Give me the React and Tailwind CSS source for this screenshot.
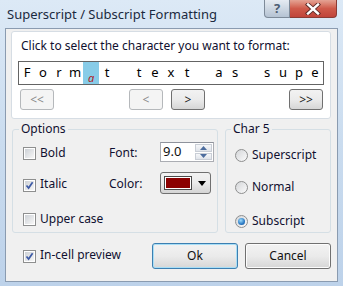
import React from 'react';

const chars = ['F', 'o', 'r', 'm', 'a', 't', ' ', 't', 'e', 'x', 't', ' ', 'a', 's', ' ', 's', 'u', 'p', 'e'];

function CheckBox({ checked }) {
  return (
    <span className="w-[13px] h-[13px] border border-[#8e8f8f] bg-white p-[1px] flex shrink-0">
      <span className="flex-1 bg-gradient-to-br from-[#cdd1d6] to-[#f7f7f7] flex items-center justify-center">
        {checked && (
          <svg width="9" height="9" viewBox="0 0 9 9">
            <path d="M1.5 4.5 L3.6 7 L7.6 1.3" fill="none" stroke="#3d5aa6" strokeWidth="1.7" />
          </svg>
        )}
      </span>
    </span>
  );
}

function Radio({ checked }) {
  return (
    <span className="w-[13px] h-[13px] rounded-full border border-[#8e8f8f] bg-gradient-to-br from-[#d4d6d9] to-[#fbfbfb] flex items-center justify-center shrink-0">
      {checked && <span className="w-[7px] h-[7px] rounded-full bg-[radial-gradient(circle_at_40%_35%,#9fdcfb,#2a79c4_60%,#174f8f)]" />}
    </span>
  );
}

function NavButton({ label, enabled }) {
  return enabled ? (
    <button className="w-[34px] h-[21px] rounded-[3px] border border-[#707070] bg-gradient-to-b from-[#f2f2f2] via-[#ebebeb] to-[#d6d6d6] text-[12px] leading-none text-[#1a1a1a]">
      {label}
    </button>
  ) : (
    <button className="w-[34px] h-[21px] rounded-[3px] border border-[#b5b8bb] bg-[#f4f4f4] text-[12px] leading-none text-[#8a8a8a]">
      {label}
    </button>
  );
}

export default function App() {
  return (
    <div className="w-[343px] h-[286px] overflow-hidden bg-gradient-to-b from-[#dce9f6] via-[#cadcef] to-[#bdd2ea] flex flex-col font-['Noto_Sans',sans-serif] text-[12px] text-[#101030]">
      {/* title bar */}
      <div className="h-[28px] flex items-start shrink-0">
        <div className="pl-[7px] pt-[5px] text-[13px] leading-[18px] text-[#1a2a40]">Superscript / Subscript Formatting</div>
        <div className="ml-auto mr-[6px] flex">
          <div className="w-[26px] h-[18px] rounded-bl-[4px] border border-t-0 border-[#7d8a99] bg-gradient-to-b from-[#e5ebf2] to-[#b5c3d3] flex items-center justify-center text-[13px] font-bold leading-none text-[#4b5c72]">
            ?
          </div>
          <div className="w-[47px] h-[18px] rounded-br-[4px] border border-t-0 border-l-0 border-[#8b3b34] bg-gradient-to-b from-[#e4a394] via-[#cf5a4a] to-[#c0443a] flex items-center justify-center">
            <svg width="16" height="12" viewBox="0 0 16 12">
              <path d="M3 1.5 L13 10.5 M13 1.5 L3 10.5" stroke="#5a2a26" strokeWidth="4.2" strokeLinecap="square" />
              <path d="M3 1.5 L13 10.5 M13 1.5 L3 10.5" stroke="#ffffff" strokeWidth="2.4" strokeLinecap="square" />
            </svg>
          </div>
        </div>
      </div>

      {/* client area */}
      <div className="ml-[5px] w-[333px] h-[254px] border border-[#8a9bb0] bg-[#f0f0f0] flex flex-col">
        {/* character panel */}
        <div className="mt-[2px] ml-[5px] w-[320px] h-[88px] rounded-[3px] border border-[#d6dde4] bg-white flex flex-col">
          <div className="mt-[6px] pl-[9px] leading-[16px]">Click to select the character you want to format:</div>
          <div className="mt-[7px] ml-[6px] w-[306px] h-[24px] border border-[#646464] flex">
            {chars.map((c, i) =>
              i === 4 ? (
                <span key={i} className="w-[16px] h-full bg-[#88cce8] flex justify-center italic text-[11px] leading-none text-[#b01818] pt-[10px]">
                  a
                </span>
              ) : (
                <span key={i} className="w-[16px] h-full flex items-center justify-center text-[13px] text-black">
                  {c}
                </span>
              )
            )}
          </div>
          <div className="mt-[4px] flex">
            <div className="ml-[8px]"><NavButton label="<<" /></div>
            <div className="ml-[75px]"><NavButton label="<" /></div>
            <div className="ml-[8px]"><NavButton label=">" enabled /></div>
            <div className="ml-[84px]"><NavButton label=">>" enabled /></div>
          </div>
        </div>

        {/* group boxes */}
        <div className="mt-[2px] flex">
          <fieldset className="ml-[6px] w-[206px] h-[112px] rounded-[3px] border border-[#d5dfe5]">
            <legend className="ml-[6px] px-[2px] leading-[16px]">Options</legend>
            <div className="mt-[5px] h-[20px] flex items-start">
              <div className="ml-[10px] w-[86px] flex items-start">
                <span className="mt-[5px]"><CheckBox /></span>
                <span className="ml-[4px] mt-[3px] leading-[16px]">Bold</span>
              </div>
              <span className="w-[51px] mt-[3px] leading-[16px]">Font:</span>
              <div className="w-[54px] h-[20px] border border-[#abadb3] border-t-[#8f939c] bg-white flex">
                <span className="flex-1 pl-[2px] text-[13px] leading-[17px] text-[#111]">9.0</span>
                <div className="w-[17px] mr-[1px] my-[1px] flex flex-col gap-[1px]">
                  <span className="flex-1 border border-[#c9ced6] bg-gradient-to-b from-[#f6f7f9] to-[#e0e4ea] flex items-center justify-center">
                    <svg width="7" height="4" viewBox="0 0 7 4"><path d="M0 4 L3.5 0 L7 4 Z" fill="#4d6d9e" /></svg>
                  </span>
                  <span className="flex-1 border border-[#c9ced6] bg-gradient-to-b from-[#f6f7f9] to-[#e0e4ea] flex items-center justify-center">
                    <svg width="7" height="4" viewBox="0 0 7 4"><path d="M0 0 L7 0 L3.5 4 Z" fill="#4d6d9e" /></svg>
                  </span>
                </div>
              </div>
            </div>
            <div className="mt-[10px] h-[22px] flex items-start">
              <div className="ml-[10px] w-[86px] flex items-start">
                <span className="mt-[7px]"><CheckBox checked /></span>
                <span className="ml-[4px] mt-[4px] leading-[16px]">Italic</span>
              </div>
              <span className="w-[51px] mt-[4px] leading-[16px]">Color:</span>
              <div className="w-[51px] h-[22px] rounded-[3px] border border-[#707070] bg-gradient-to-b from-[#f2f2f2] via-[#ebebeb] to-[#d4d4d4] flex items-center">
                <span className="ml-[3px] w-[28px] h-[14px] border border-[#4a4a4a] bg-white p-[1px] flex">
                  <span className="flex-1 bg-[#8b0000]" />
                </span>
                <svg className="ml-[6px]" width="8" height="5" viewBox="0 0 8 5"><path d="M0 0 L8 0 L4 5 Z" fill="#000" /></svg>
              </div>
            </div>
            <div className="mt-[16px] flex items-start">
              <div className="ml-[10px] flex items-start">
                <span className="mt-[3px]"><CheckBox /></span>
                <span className="ml-[4px] mt-[1px] leading-[16px]">Upper case</span>
              </div>
            </div>
          </fieldset>

          <fieldset className="ml-[7px] w-[106px] h-[112px] rounded-[3px] border border-[#d5dfe5]">
            <legend className="ml-[5px] px-[2px] leading-[16px]">Char 5</legend>
            <div className="mt-[10px] ml-[9px] flex items-center">
              <Radio />
              <span className="ml-[4px] leading-[16px]">Superscript</span>
            </div>
            <div className="mt-[16px] ml-[9px] flex items-center">
              <Radio />
              <span className="ml-[4px] leading-[16px]">Normal</span>
            </div>
            <div className="mt-[18px] ml-[9px] flex items-center">
              <Radio checked />
              <span className="ml-[4px] leading-[16px]">Subscript</span>
            </div>
          </fieldset>
        </div>

        {/* bottom row */}
        <div className="mt-[10px] mr-[6px] flex items-start">
          <div className="ml-[17px] flex items-start">
            <span className="mt-[7px]"><CheckBox checked /></span>
            <span className="ml-[4px] mt-[4px] leading-[16px]">In-cell preview</span>
          </div>
          <button className="ml-auto w-[86px] h-[26px] rounded-[3px] border border-[#3c7fb1] bg-gradient-to-b from-[#f2f2f2] via-[#ebebeb] to-[#d6d6d6] shadow-[inset_0_0_0_1px_#a8def6] text-[12px] text-[#111]">
            Ok
          </button>
          <button className="ml-[7px] w-[86px] h-[26px] rounded-[3px] border border-[#707070] bg-gradient-to-b from-[#f2f2f2] via-[#ebebeb] to-[#d6d6d6] shadow-[inset_0_0_0_1px_#fcfcfc] text-[12px] text-[#111]">
            Cancel
          </button>
        </div>
      </div>
    </div>
  );
}
